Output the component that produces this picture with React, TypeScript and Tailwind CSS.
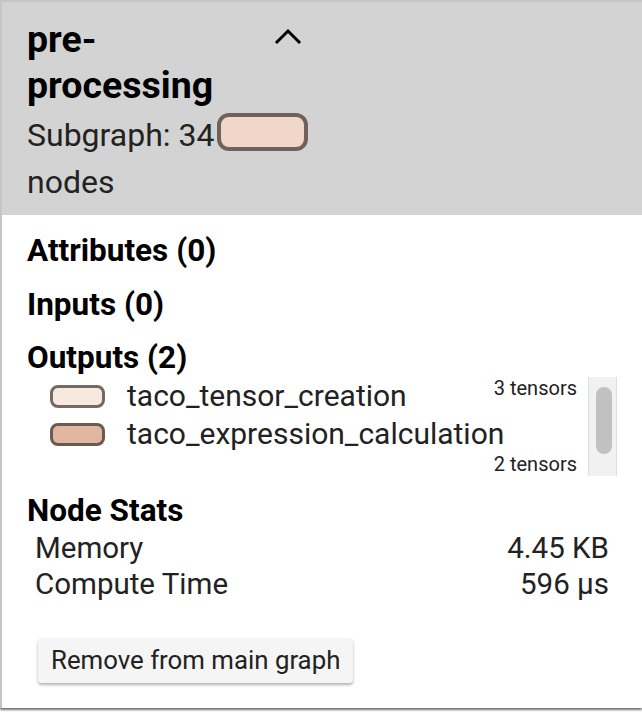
import React from "react";

interface OutputItem {
  name: string;
  tensors: string;
  fill: string;
  stroke: string;
}

const outputs: OutputItem[] = [
  { name: "taco_tensor_creation", tensors: "3 tensors", fill: "bg-[#f6e9e0]", stroke: "border-[#736a64]" },
  { name: "taco_expression_calculation", tensors: "2 tensors", fill: "bg-[#e2b7a2]", stroke: "border-[#6b5a50]" },
];

const stats = [
  { label: "Memory", value: "4.45 KB" },
  { label: "Compute Time", value: "596 µs" },
];

const Chevron = () => (
  <svg width="28" height="17" viewBox="0 0 28 17" className="mt-[12px] shrink-0">
    <polyline points="3,14 14,3 25,14" fill="none" stroke="#000" strokeWidth="3" strokeLinecap="square" />
  </svg>
);

export default function App() {
  return (
    <div className="w-[642px] h-[712px] bg-white overflow-hidden font-['Roboto',sans-serif]">
      <div className="h-[708px] border-t-2 border-l-2 border-[#c5c5c5] bg-white shadow-[0_2px_2px_rgba(0,0,0,0.55)] flex flex-col">
        <div className="bg-[#d3d3d3] pl-[25px] pt-[14px] h-[213px] shrink-0">
          <div className="w-[275px] flex items-start justify-between">
            <div className="text-[37.5px] leading-[46px] font-bold text-black w-[230px]">pre-processing</div>
            <Chevron />
          </div>
          <div className="mt-[4px] w-[300px] text-[32px] leading-[47px] text-[#222]">
            Subgraph: 34
            <span className="inline-block align-[-5px] ml-[3px] w-[91px] h-[38px] rounded-[12px] border-4 border-[#6f625b] bg-[#f0d7ca]" />{" "}
            nodes
          </div>
        </div>

        <div className="pl-[25px] pr-[25px] pt-[9px] flex flex-col">
          <div className="text-[31.5px] leading-[54px] font-bold text-black">Attributes (0)</div>
          <div className="text-[31.5px] leading-[54px] font-bold text-black">Inputs (0)</div>
          <div className="pt-[8px] text-[31.5px] leading-[36px] font-bold text-black">Outputs (2)</div>

          <div className="mt-[1px] ml-[23px] flex">
            <div className="flex-1 h-[99px] overflow-hidden pr-[11px]">
              {outputs.map((o) => (
                <div key={o.name} className="flex flex-wrap items-start">
                  <div className="flex items-center h-[38px]">
                    <span className={`inline-block w-[55px] h-[23px] rounded-[8px] border-[3px] ${o.fill} ${o.stroke}`} />
                    <span className="ml-[22px] text-[30px] text-[#222] leading-[38px]">{o.name}</span>
                  </div>
                  <span className="ml-auto text-[20px] leading-[22px] text-[#222]">{o.tensors}</span>
                </div>
              ))}
            </div>
            <div className="w-[29px] h-[99px] bg-[#f1f1f1] border-x border-[#dedede] pt-[10px] pl-[7px]">
              <div className="w-[16px] h-[67px] rounded-full bg-[#c1c1c1]" />
            </div>
          </div>

          <div className="mt-[17px] text-[31.5px] leading-[36px] font-bold text-black">Node Stats</div>
          <div className="mt-[1px] pl-[8px] pr-[8px] flex flex-col">
            {stats.map((s) => (
              <div key={s.label} className="flex justify-between text-[29.5px] leading-[36px] text-[#222]">
                <span>{s.label}</span>
                <span>{s.value}</span>
              </div>
            ))}
          </div>

          <div className="mt-[36px] ml-[11px]">
            <button className="h-[45px] px-[13px] rounded-[4px] bg-[#f5f5f5] text-[25.8px] text-[#222] shadow-[0_2px_3px_rgba(0,0,0,0.3)]">
              Remove from main graph
            </button>
          </div>
        </div>
      </div>
    </div>
  );
}
